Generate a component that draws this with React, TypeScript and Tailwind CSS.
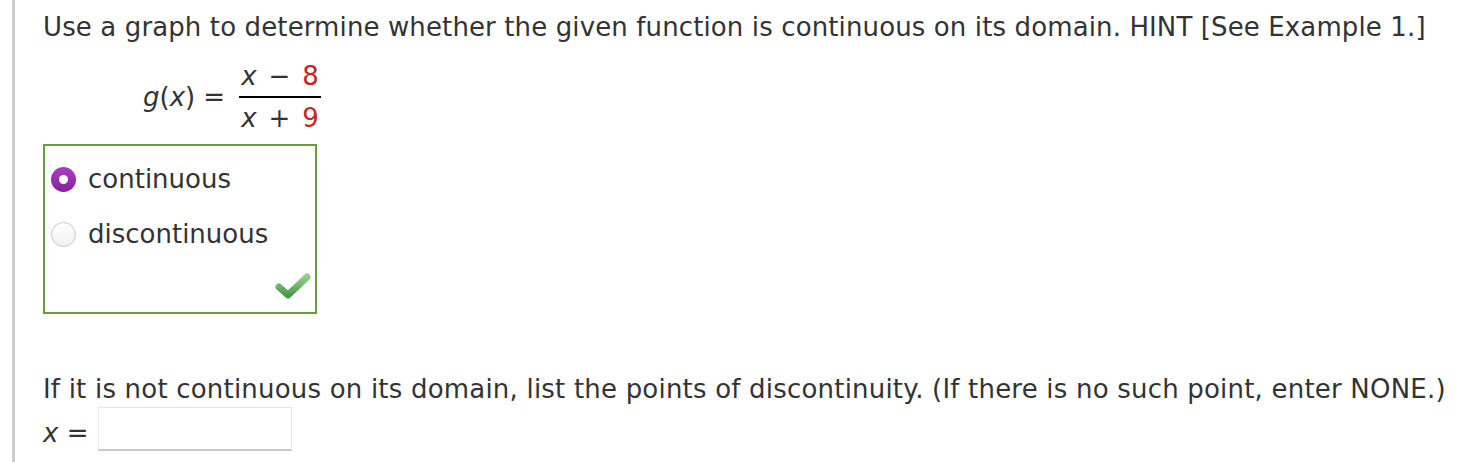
import React from "react";

const font = { fontFamily: '"DejaVu Sans", Verdana, sans-serif' };

const Check = () => (
  <svg width="40" height="28" viewBox="0 0 40 28">
    <defs>
      <linearGradient id="chk" x1="0" y1="0" x2="0" y2="1">
        <stop offset="0" stopColor="#8fd08a" />
        <stop offset="1" stopColor="#4c9a48" />
      </linearGradient>
    </defs>
    <path
      d="M7 15 L16 23 L35 5"
      fill="none"
      stroke="url(#chk)"
      strokeWidth="7"
      strokeLinecap="round"
      strokeLinejoin="round"
    />
  </svg>
);

const Radio = ({ on }: { on: boolean }) =>
  on ? (
    <span className="inline-flex h-[25px] w-[25px] items-center justify-center rounded-full bg-gradient-to-b from-[#a93fc0] to-[#86209f]">
      <span className="h-[9px] w-[9px] rounded-full bg-white" />
    </span>
  ) : (
    <span className="inline-block h-[25px] w-[25px] rounded-full border border-[#c8c8c8] bg-gradient-to-b from-white to-[#f0f0f0]" />
  );

export default function App() {
  return (
    <div className="h-[462px] w-[1470px] bg-white text-[#333333]" style={font}>
      <div className="ml-[12px] h-full border-l-[3px] border-[#cccccc] pl-[28px] pt-[8px] text-[26px] leading-[38px]">
        <p className="tracking-[0.12px]">
          Use a graph to determine whether the given function is continuous on its domain. HINT [See Example 1.]
        </p>

        <div className="mt-[10px] flex items-center pl-[100px]">
          <span>
            <i>g</i>(<i>x</i>)
          </span>
          <span className="ml-[8px] mr-[14px]">=</span>
          <span className="flex flex-col items-center">
            <span className="flex gap-[12px] px-[2px] leading-[40px]">
              <i>x</i>
              <span>−</span>
              <span className="text-[#c9231b]">8</span>
            </span>
            <span className="h-[2px] w-[82px] bg-black" />
            <span className="flex gap-[12px] px-[2px] leading-[40px]">
              <i>x</i>
              <span>+</span>
              <span className="text-[#c9231b]">9</span>
            </span>
          </span>
        </div>

        <div className="mt-[6px] flex h-[170px] w-[274px] flex-col border-2 border-[#6a9b3c] pl-[6px] pt-[14px]">
          <label className="flex items-center gap-[12px]">
            <Radio on />
            <span>continuous</span>
          </label>
          <label className="mt-[17px] flex items-center gap-[12px]">
            <Radio on={false} />
            <span>discontinuous</span>
          </label>
          <div className="mt-auto mb-[12px] mr-[3px] self-end">
            <Check />
          </div>
        </div>

        <p className="mt-[56px] tracking-[0.2px]">
          If it is not continuous on its domain, list the points of discontinuity. (If there is no such point, enter NONE.)
        </p>
        <div className="-mt-[1px] flex items-start">
          <span className="mt-[7px]">
            <i>x</i> =
          </span>
          <span className="ml-[10px] h-[44px] w-[194px] border border-[#e6e6e6] border-b-2 border-b-[#c8c8c8]" />
        </div>
      </div>
    </div>
  );
}
